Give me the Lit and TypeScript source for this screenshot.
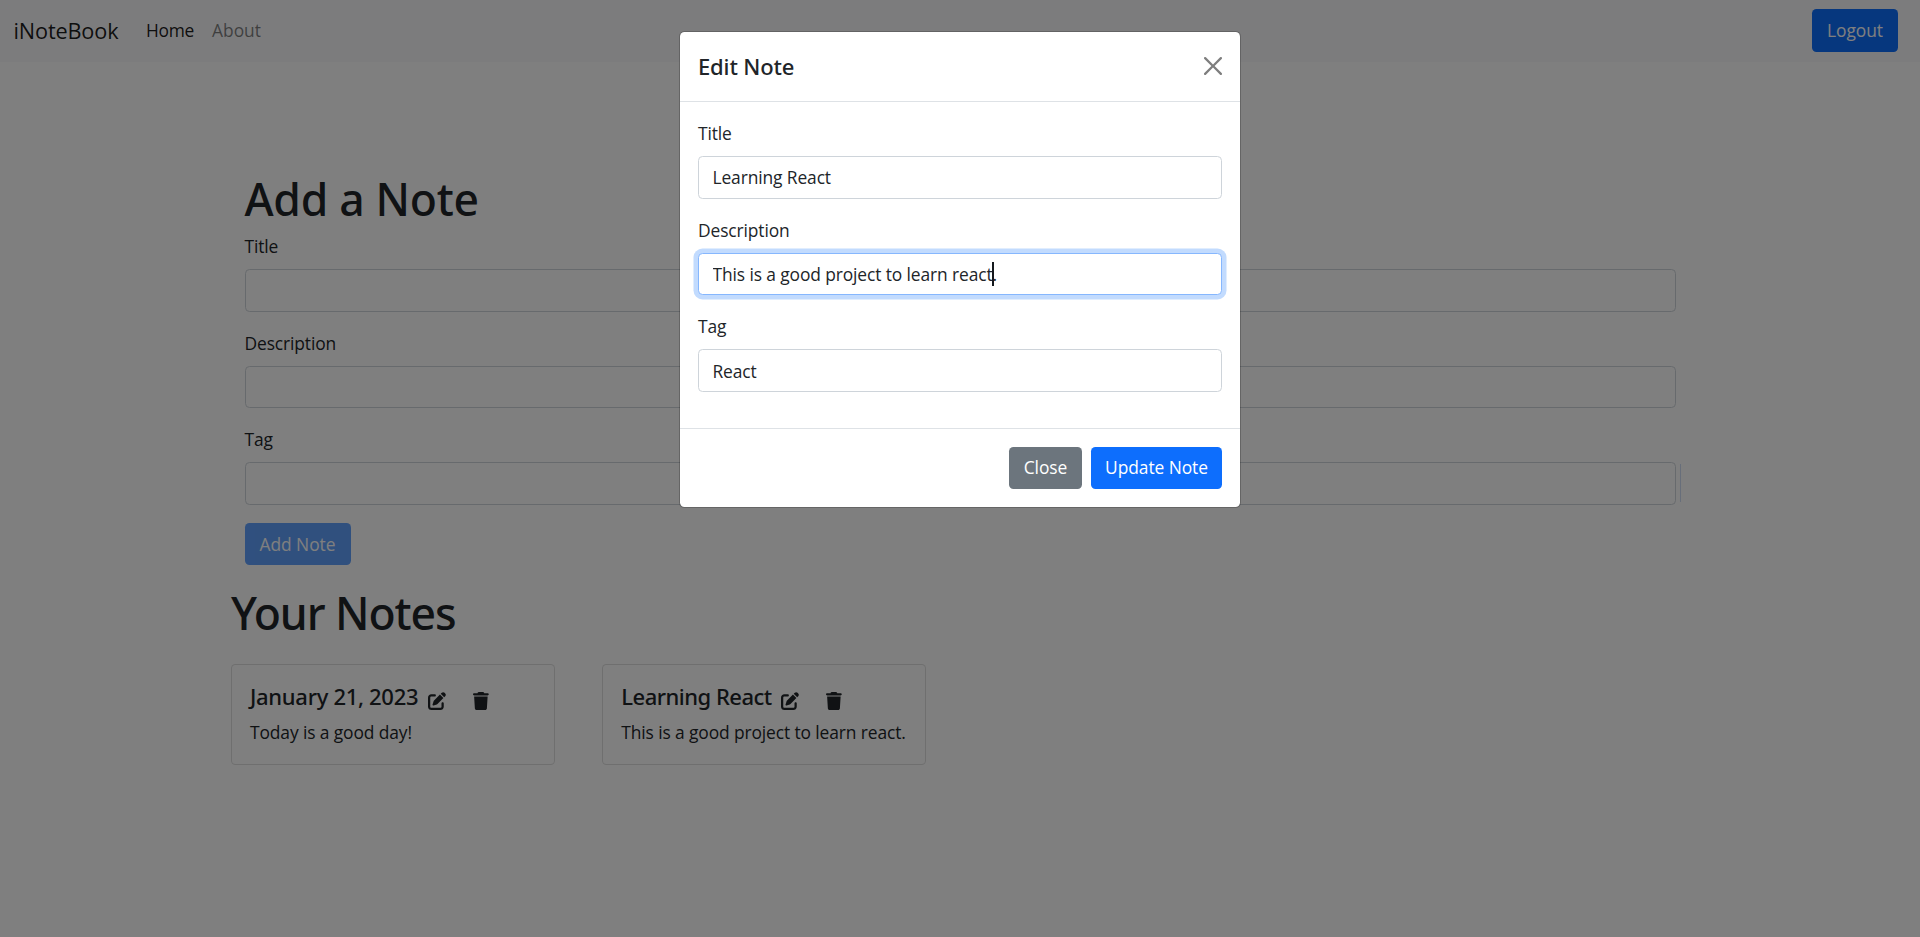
import { LitElement, html, css, nothing } from "lit";
import { customElement, property } from "lit/decorators.js";
import { classMap } from "lit/directives/class-map.js";

const base = css`
  * { box-sizing: border-box; }
  :host {
    display: block;
    font: 400 17.4px/27px "Open Sans", "Noto Sans", sans-serif;
    letter-spacing: -0.11px;
    color: #212529;
  }
  h1, h5, p { margin: 0; }
  h1, h5 { font-family: "Noto Sans", sans-serif; font-weight: 500; white-space: nowrap; }
  .btn {
    height: 42.75px;
    padding: 0;
    border: 0;
    border-radius: 4.5px;
    font: inherit;
    letter-spacing: -0.07px;
    text-align: center;
    color: #fff;
    background: #0d6efd;
  }
`;

@customElement("form-field")
export class FormField extends LitElement {
  @property() label = "";
  @property() value = "";
  @property({ type: Boolean }) active = false;
  @property({ type: Boolean }) trace = false;

  static styles = [base, css`
    :host { margin-bottom: 18px; }
    label { display: block; line-height: 26.6px; margin-bottom: 9.4px; }
    .wrap { position: relative; height: 42.75px; }
    input {
      display: block;
      width: 100%;
      height: 42.75px;
      padding: 0 13.5px;
      border: 1px solid #ced4da;
      border-radius: 4.5px;
      background: #fff;
      font: inherit;
      letter-spacing: inherit;
      color: #212529;
      outline: 0;
    }
    .active { border-color: #86b7fe; box-shadow: 0 0 0 4.5px rgba(13, 110, 253, 0.25); }
    .caret { position: absolute; left: 294px; top: 9px; width: 2px; height: 24px; background: #15191d; }
    .trace { position: absolute; right: -5px; top: 2px; width: 1px; height: 38px; background: #cfdcf5; }
  `];

  render() {
    return html`
      <label>${this.label}</label>
      <div class="wrap">
        <input class=${classMap({ active: this.active })} .value=${this.value} />
        ${this.active ? html`<span class="caret"></span>` : nothing}
        ${this.trace ? html`<span class="trace"></span>` : nothing}
      </div>`;
  }
}

@customElement("note-card")
export class NoteCard extends LitElement {
  @property() heading = "";
  @property() text = "";
  @property({ type: Boolean }) wide = false;

  static styles = [base, css`
    .card {
      width: 324px;
      height: 101px;
      padding: 18px;
      border: 1px solid rgba(0, 0, 0, 0.125);
      border-radius: 4.5px;
      background: #fff;
    }
    .head { display: flex; align-items: center; height: 36px; }
    h5 { width: 151px; font-size: 22px; line-height: 27px; margin-bottom: 9px; letter-spacing: -0.5px; }
    h5.wide { width: 169.4px; letter-spacing: -0.3px; }
    svg { flex: none; height: 18px; fill: #212529; }
    .edit { width: 18px; margin: 0 9px; }
    .trash { width: 15.75px; margin-left: 18px; }
    p { line-height: 26.6px; white-space: nowrap; }
  `];

  render() {
    return html`
      <div class="card">
        <div class="head">
          <h5 class=${classMap({ wide: this.wide })}>${this.heading}</h5>
          <svg class="edit" viewBox="0 0 512 512"><path d="M471.6 21.7c-21.9-21.9-57.3-21.9-79.2 0L362.3 51.7l97.9 97.9 30.1-30.1c21.9-21.9 21.9-57.3 0-79.2L471.6 21.7zm-299.2 220c-6.1 6.1-10.8 13.6-13.5 21.9l-29.6 88.8c-2.9 8.6-.6 18.1 5.8 24.6s15.9 8.7 24.6 5.8l88.8-29.6c8.2-2.7 15.7-7.4 21.9-13.5L437.7 172.3 339.7 74.3 172.4 241.7zM96 64C43 64 0 107 0 160V416c0 53 43 96 96 96H352c53 0 96-43 96-96V320c0-17.7-14.3-32-32-32s-32 14.3-32 32v96c0 17.7-14.3 32-32 32H96c-17.7 0-32-14.3-32-32V160c0-17.7 14.3-32 32-32h96c17.7 0 32-14.3 32-32s-14.3-32-32-32H96z"/></svg>
          <svg class="trash" viewBox="0 0 448 512"><path d="M135.2 17.7L128 32H32C14.3 32 0 46.3 0 64S14.3 96 32 96H416c17.7 0 32-14.3 32-32s-14.3-32-32-32H320l-7.2-14.3C307.4 6.8 296.3 0 284.2 0H163.8c-12.1 0-23.2 6.8-28.6 17.7zM416 128H32L53.2 467c1.6 25.3 22.6 45 47.9 45H346.9c25.3 0 46.3-19.7 47.9-45L416 128z"/></svg>
        </div>
        <p>${this.text}</p>
      </div>`;
  }
}

@customElement("app-root")
export class AppRoot extends LitElement {
  static styles = [base, css`
    :host { position: relative; height: 937px; overflow: hidden; background: #fff; }
    nav {
      display: flex;
      align-items: center;
      height: 62px;
      padding: 0 22px 1px 13.5px;
      background: #f8f9fa;
    }
    .brand { font-size: 21.7px; letter-spacing: -0.15px; color: rgba(0, 0, 0, 0.9); width: 132.5px; }
    .link { width: 66px; color: rgba(0, 0, 0, 0.9); letter-spacing: -0.3px; }
    .muted { color: rgba(0, 0, 0, 0.5); letter-spacing: 0; }
    .logout { width: 86px; margin-left: auto; }
    .container { width: 1458px; margin: 0 auto; padding-top: 107.8px; }
    .add { padding: 0 13.5px; }
    h1 { font-size: 44.5px; line-height: 57.4px; margin-bottom: 5.6px; letter-spacing: -0.3px; }
    h1.notes { margin-top: 18.7px; letter-spacing: -1.05px; }
    .add-btn { display: block; width: 106px; height: 42px; opacity: 0.65; }
    .cards { display: flex; gap: 47.25px; margin-top: 23px; }
    .backdrop {
      position: absolute;
      inset: 0;
      display: flex;
      align-items: flex-start;
      justify-content: center;
      padding-top: 31px;
      background: rgba(0, 0, 0, 0.5);
    }
    .modal {
      width: 562px;
      border: 1px solid rgba(0, 0, 0, 0.2);
      border-radius: 5.4px;
      background: #fff;
      background-clip: padding-box;
    }
    .header {
      display: flex;
      align-items: center;
      justify-content: space-between;
      height: 70px;
      padding: 0 18px;
      border-bottom: 1px solid #dee2e6;
    }
    .header h5 { font-size: 22px; line-height: 28px; margin-bottom: 2px; letter-spacing: -0.15px; }
    .close { width: 18px; height: 18px; margin-bottom: 2px; opacity: 0.5; }
    .body { padding: 17.85px 18px 17.6px; }
    .footer {
      display: flex;
      justify-content: flex-end;
      gap: 9px;
      height: 79px;
      padding: 18.3px 18px;
      border-top: 1px solid #dee2e6;
    }
    .footer .btn { height: 42px; }
    .secondary { width: 73px; background: #6c757d; }
    .primary { width: 131px; }
  `];

  render() {
    return html`
      <nav>
        <span class="brand">iNoteBook</span>
        <span class="link">Home</span>
        <span class="link muted">About</span>
        <button class="btn logout">Logout</button>
      </nav>
      <div class="container">
        <div class="add">
          <h1>Add a Note</h1>
          <form-field label="Title"></form-field>
          <form-field label="Description"></form-field>
          <form-field label="Tag" trace></form-field>
          <button class="btn add-btn">Add Note</button>
        </div>
        <h1 class="notes">Your Notes</h1>
        <div class="cards">
          <note-card heading="January 21, 2023" text="Today is a good day!" wide></note-card>
          <note-card heading="Learning React" text="This is a good project to learn react."></note-card>
        </div>
      </div>
      <div class="backdrop">
        <div class="modal">
          <div class="header">
            <h5>Edit Note</h5>
            <svg class="close" viewBox="0 0 16 16"><path d="M.293.293a1 1 0 011.414 0L8 6.586 14.293.293a1 1 0 111.414 1.414L9.414 8l6.293 6.293a1 1 0 01-1.414 1.414L8 9.414l-6.293 6.293a1 1 0 01-1.414-1.414L6.586 8 .293 1.707a1 1 0 010-1.414z"/></svg>
          </div>
          <div class="body">
            <form-field label="Title" value="Learning React"></form-field>
            <form-field label="Description" value="This is a good project to learn react." active></form-field>
            <form-field label="Tag" value="React"></form-field>
          </div>
          <div class="footer">
            <button class="btn secondary">Close</button>
            <button class="btn primary">Update Note</button>
          </div>
        </div>
      </div>`;
  }
}
